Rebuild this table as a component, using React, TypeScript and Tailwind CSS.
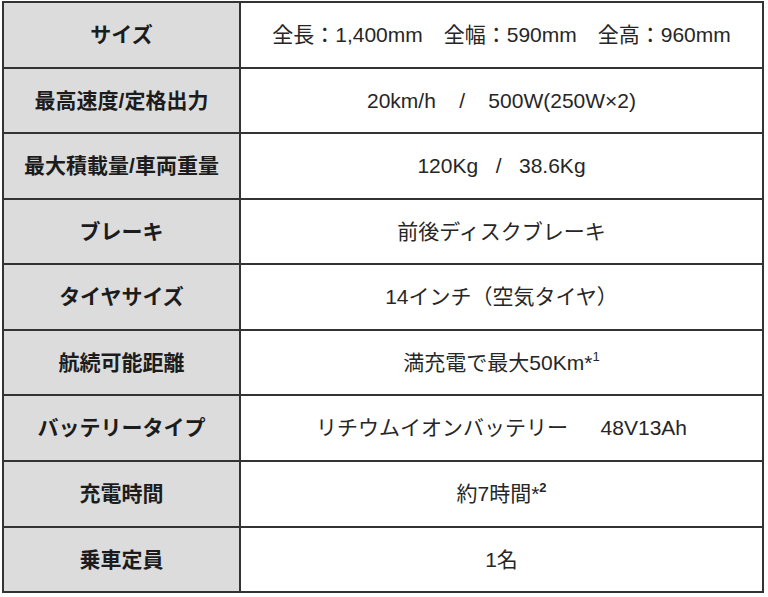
const specs: { label: string; value: React.ReactNode }[] = [
  { label: "サイズ", value: "全長：1,400mm　全幅：590mm　全高：960mm" },
  { label: "最高速度/定格出力", value: "20km/h    /    500W(250W×2)" },
  { label: "最大積載量/車両重量", value: "120Kg   /   38.6Kg" },
  { label: "ブレーキ", value: "前後ディスクブレーキ" },
  { label: "タイヤサイズ", value: "14インチ（空気タイヤ）" },
  {
    label: "航続可能距離",
    value: (
      <>
        満充電で最大50Km*<sup className="text-[13px] -top-[0.45em]">1</sup>
      </>
    ),
  },
  { label: "バッテリータイプ", value: "リチウムイオンバッテリー　  48V13Ah" },
  {
    label: "充電時間",
    value: (
      <>
        約7時間*<sup className="text-[13px] font-bold -top-[0.45em]">2</sup>
      </>
    ),
  },
  { label: "乗車定員", value: "1名" },
];

export default function App() {
  return (
    <div
      className="min-h-screen bg-white pt-[1px] pl-[2px]"
      style={{ fontFamily: '"Liberation Sans", "Noto Sans CJK JP", sans-serif' }}
    >
      {/* Spec table */}
      <div className="flex h-[592px] w-[762px] flex-col border-2 border-[#333]">
        {specs.map((row, i) => (
          <div
            key={row.label}
            className={`flex flex-1 ${i > 0 ? "border-t-2 border-[#333]" : ""}`}
          >
            <div className="flex w-[237px] items-center justify-center border-r-2 border-[#333] bg-[#dcdcdc] text-[21px] font-bold text-[#1c1c1c]">
              {row.label}
            </div>
            <div className="flex flex-1 items-center justify-center whitespace-pre text-[21px] text-[#262626]">
              {row.value}
            </div>
          </div>
        ))}
      </div>
    </div>
  );
}
